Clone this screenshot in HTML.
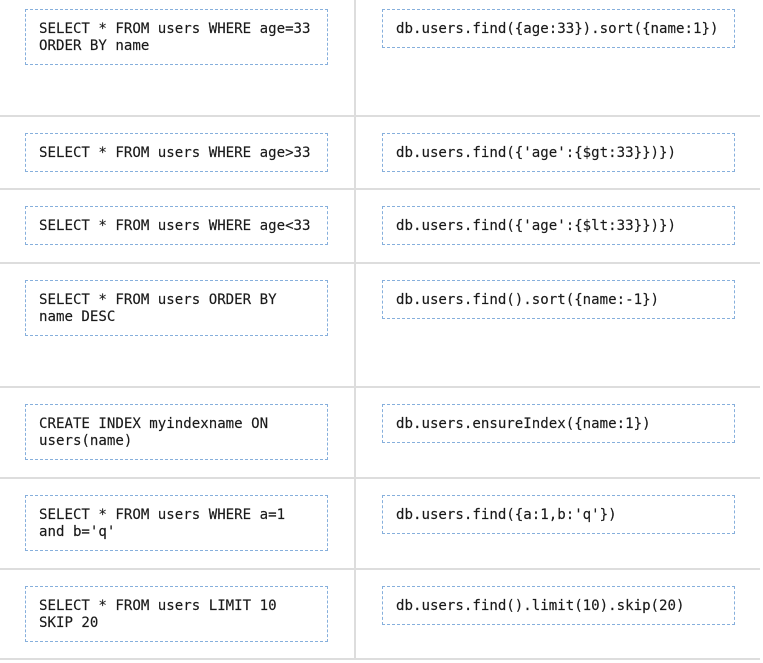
<!DOCTYPE html>
<html><head><meta charset="utf-8"><style>
body{margin:0;background:#fff;width:763px;height:663px;overflow:hidden;position:relative;font-family:"DejaVu Sans Mono","Liberation Mono",monospace;font-size:14.1px;color:#1a1a1a}
.h{position:absolute;left:0;width:760px;height:2px;background:#ddd}
.v{position:absolute;left:354px;top:0;width:2px;height:660px;background:#ddd}
.b{position:absolute;border:1px dashed #86afdc;padding:11px 13px 9px;line-height:17px;white-space:pre;box-sizing:border-box;-webkit-text-stroke:0.15px #1a1a1a}
.l{left:25px;width:303px}.r{left:382px;width:353px}
</style></head><body>
<div class="v"></div>
<div class="h" style="top:115px"></div>
<div class="h" style="top:188px"></div>
<div class="h" style="top:262px"></div>
<div class="h" style="top:386px"></div>
<div class="h" style="top:477px"></div>
<div class="h" style="top:568px"></div>
<div class="h" style="top:658px"></div>
<div class="b l" style="top:9px">SELECT * FROM users WHERE age=33
ORDER BY name</div>
<div class="b r" style="top:9px">db.users.find({age:33}).sort({name:1})</div>
<div class="b l" style="top:133px">SELECT * FROM users WHERE age>33</div>
<div class="b r" style="top:133px">db.users.find({'age':{$gt:33}})})</div>
<div class="b l" style="top:206px">SELECT * FROM users WHERE age&lt;33</div>
<div class="b r" style="top:206px">db.users.find({'age':{$lt:33}})})</div>
<div class="b l" style="top:280px">SELECT * FROM users ORDER BY
name DESC</div>
<div class="b r" style="top:280px">db.users.find().sort({name:-1})</div>
<div class="b l" style="top:404px">CREATE INDEX myindexname ON
users(name)</div>
<div class="b r" style="top:404px">db.users.ensureIndex({name:1})</div>
<div class="b l" style="top:495px">SELECT * FROM users WHERE a=1
and b='q'</div>
<div class="b r" style="top:495px">db.users.find({a:1,b:'q'})</div>
<div class="b l" style="top:586px">SELECT * FROM users LIMIT 10
SKIP 20</div>
<div class="b r" style="top:586px">db.users.find().limit(10).skip(20)</div>
</body></html>
